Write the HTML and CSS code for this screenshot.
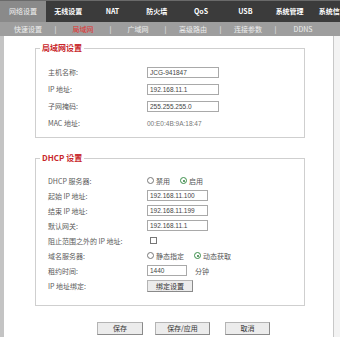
FILE: index.html
```html
<!DOCTYPE html>
<html lang="zh">
<head>
<meta charset="utf-8">
<title>网络设置</title>
<link rel="stylesheet" href="styles.css">
</head>
<body>
<div class="nav">
  <div class="tab active">网络设置</div>
  <div class="tab">无线设置</div>
  <div class="tab">NAT</div>
  <div class="tab">防火墙</div>
  <div class="tab">QoS</div>
  <div class="tab">USB</div>
  <div class="tab">系统管理</div>
  <div class="tab tab-cut">系统信息</div>
</div>
<div class="subnav">
  <span class="item">快速设置</span><span class="sep">|</span>
  <span class="item current">局域网</span><span class="sep">|</span>
  <span class="item">广域网</span><span class="sep">|</span>
  <span class="item">高级路由</span><span class="sep">|</span>
  <span class="item">连接参数</span><span class="sep">|</span>
  <span class="item">DDNS</span>
</div>
<div class="page">
  <div class="main">
    <fieldset class="box box-lan">
      <legend>局域网设置</legend>
      <div class="rows rows-lan">
        <div class="row"><span class="label">主机名称:</span><input class="field field-wide" type="text" value="JCG-941847"></div>
        <div class="row"><span class="label">IP 地址:</span><input class="field field-wide" type="text" value="192.168.11.1"></div>
        <div class="row"><span class="label">子网掩码:</span><input class="field field-wide" type="text" value="255.255.255.0"></div>
        <div class="row"><span class="label">MAC 地址:</span><span class="value">00:E0:4B:9A:18:47</span></div>
      </div>
    </fieldset>
    <fieldset class="box box-dhcp">
      <legend>DHCP 设置</legend>
      <div class="rows rows-dhcp">
        <div class="row"><span class="label">DHCP 服务器:</span>
          <span class="radio"></span><span class="opt">禁用</span>
          <span class="radio checked"></span><span class="opt">启用</span></div>
        <div class="row"><span class="label">起始 IP 地址:</span><input class="field field-mid" type="text" value="192.168.11.100"></div>
        <div class="row"><span class="label">结束 IP 地址:</span><input class="field field-mid" type="text" value="192.168.11.199"></div>
        <div class="row"><span class="label">默认网关:</span><input class="field field-mid" type="text" value="192.168.11.1"></div>
        <div class="row"><span class="label">阻止范围之外的 IP 地址:</span><span class="check"></span></div>
        <div class="row"><span class="label">域名服务器:</span>
          <span class="radio"></span><span class="opt">静态指定</span>
          <span class="radio checked"></span><span class="opt">动态获取</span></div>
        <div class="row"><span class="label">租约时间:</span><input class="field field-short" type="text" value="1440"><span class="unit">分钟</span></div>
        <div class="row"><span class="label">IP 地址绑定:</span><button class="btn btn-bind" type="button">绑定设置</button></div>
      </div>
    </fieldset>
    <div class="buttons">
      <button class="btn btn-save" type="button">保存</button>
      <button class="btn btn-apply" type="button">保存/应用</button>
      <button class="btn btn-cancel" type="button">取消</button>
    </div>
  </div>
  <div class="rest"></div>
</div>
</body>
</html>
```
FILE: styles.css
```css
* { box-sizing: border-box; }
html, body { margin: 0; padding: 0; }
body {
  width: 340px;
  height: 337px;
  overflow: hidden;
  background: #ffffff;
  font-family: "Noto Sans CJK SC", "Liberation Sans", sans-serif;
  font-size: 7px;
  color: #555;
}
.nav {
  display: flex;
  height: 22px;
  background: #3b3b3b;
  border-top: 1px solid #6a6a6a;
  white-space: nowrap;
  overflow: hidden;
}
.tab {
  flex: 0 0 44.3px;
  text-align: center;
  line-height: 21px;
  color: #fff;
  font-weight: bold;
  font-size: 7px;
}
.tab-cut { flex: 1 0 auto; text-align: left; padding-left: 7px; }
.tab.active {
  flex-basis: 46px;
  background: #8a8a8a;
  color: #f2f2f2;
  font-weight: normal;
}
.subnav {
  display: flex;
  height: 14px;
  background: #9e9e9e;
  padding-left: 8px;
  line-height: 14px;
  color: #eeeeee;
  white-space: nowrap;
}
.subnav .item { width: 40px; text-align: center; }
.subnav .sep { width: 15px; text-align: center; color: #f4f4f4; }
.subnav .current { color: #e3312e; }
.page {
  display: flex;
  height: 301px;
}
.main {
  width: 334px;
  border-left: 4px solid #c4c4c4;
  border-right: 1px solid #c8c8c8;
  padding: 7px 0 0 31px;
  background: #fff;
}
.rest { flex: 1; background: #f3f3f3; }
.box {
  width: 270px;
  margin: 0;
  padding: 0;
  border: 1px solid #cfcfcf;
  min-width: 0;
}
.box legend {
  margin-left: 4px;
  padding: 0 2px;
  font-size: 8px;
  line-height: 10px;
  font-weight: bold;
  color: #c8262b;
}
.box-dhcp { margin-top: 15px; }
.rows-lan { padding: 10.5px 0 5.5px 12px; }
.rows-lan .row { height: 17px; }
.rows-dhcp { padding: 10px 0 12px 12px; }
.rows-dhcp .row { height: 15px; }
.row {
  display: flex;
  align-items: center;
}
.label { width: 99px; flex: none; color: #5a5a5a; }
.field {
  height: 11px;
  padding: 0 2px;
  margin: 0;
  border: 1px solid #a9a9a9;
  font-family: "Liberation Sans", sans-serif;
  font-size: 6.5px;
  color: #444;
  background: #fff;
  outline: none;
}
.field-wide { width: 72px; }
.field-mid { width: 61px; }
.field-short { width: 40px; }
.value { font-family: "Liberation Sans", sans-serif; font-size: 6.5px; color: #777; }
.unit { margin-left: 8px; }
.radio {
  width: 7px;
  height: 7px;
  border: 1px solid #777;
  border-radius: 50%;
  margin-right: 2px;
  position: relative;
  flex: none;
}
.radio.checked { border-color: #3b8f4a; }
.radio.checked::after {
  content: "";
  position: absolute;
  left: 1.5px;
  top: 1.5px;
  width: 2px;
  height: 2px;
  border-radius: 50%;
  background: #2f7d3d;
}
.opt { margin-right: 10px; }
.check {
  width: 7px;
  height: 7px;
  margin-left: 3px;
  border: 1px solid #777;
  background: #fff;
}
.btn {
  height: 13px;
  padding: 0;
  margin: 0;
  border: 1px solid #b4b4b4;
  border-right-color: #8a8a8a;
  border-bottom-color: #8a8a8a;
  background: #ececec;
  font-family: "Noto Sans CJK SC", sans-serif;
  font-size: 7px;
  color: #333;
  line-height: 11px;
}
.btn-bind { width: 46px; height: 12px; }
.buttons {
  display: flex;
  margin-top: 16px;
  padding-left: 62px;
}
.btn-save { width: 46px; }
.btn-apply { width: 55px; margin-left: 12px; }
.btn-cancel { width: 45px; margin-left: 15px; }
```
